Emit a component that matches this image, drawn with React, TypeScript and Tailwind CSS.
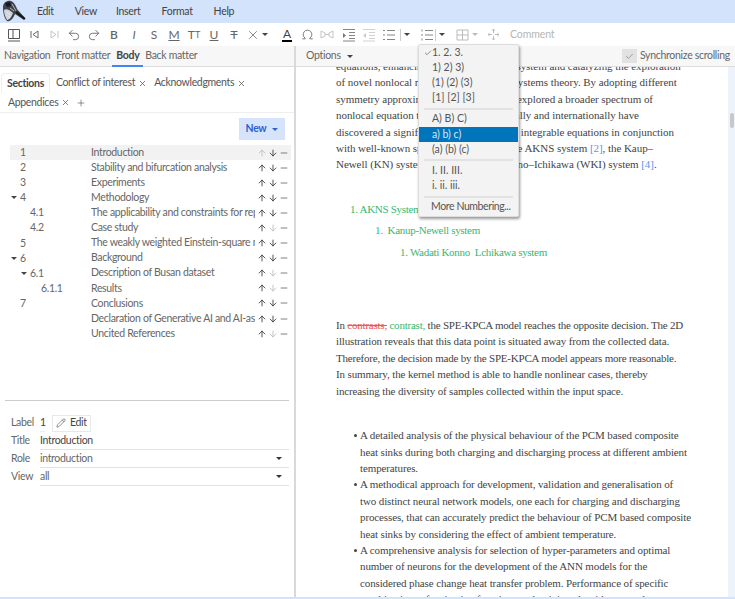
import { ArrowDown, ArrowUp, Check, Minus, Omega, Pencil, Plus, Redo2, Undo2, X } from 'lucide-react';

const ui = { fontFamily: 'Lato, sans-serif' };

const MENUS = [
  { label: 'Edit', className: 'ml-[37px]' },
  { label: 'View', className: 'ml-[21px]' },
  { label: 'Insert', className: 'ml-[19px]' },
  { label: 'Format', className: 'ml-[21px]' },
  { label: 'Help', className: 'ml-[21px]' },
];

const SECTIONS = [
  { num: '1', title: 'Introduction', indent: 0, caret: false, up: false, down: true, active: true },
  { num: '2', title: 'Stability and bifurcation analysis', indent: 0, caret: false, up: true, down: true },
  { num: '3', title: 'Experiments', indent: 0, caret: false, up: true, down: true },
  { num: '4', title: 'Methodology', indent: 0, caret: true, up: true, down: true },
  { num: '4.1', title: 'The applicability and constraints for replacing', indent: 1, caret: false, up: true, down: true },
  { num: '4.2', title: 'Case study', indent: 1, caret: false, up: true, down: false },
  { num: '5', title: 'The weakly weighted Einstein-square model of', indent: 0, caret: false, up: true, down: true },
  { num: '6', title: 'Background', indent: 0, caret: true, up: true, down: true },
  { num: '6.1', title: 'Description of Busan dataset', indent: 1, caret: true, up: true, down: false },
  { num: '6.1.1', title: 'Results', indent: 2, caret: false, up: true, down: false },
  { num: '7', title: 'Conclusions', indent: 0, caret: false, up: true, down: true },
  { num: '', title: 'Declaration of Generative AI and AI-assisted', indent: 0, caret: false, up: true, down: true },
  { num: '', title: 'Uncited References', indent: 0, caret: false, up: true, down: false },
];

const NUMBERING = [
  ['1. 2. 3.', '1) 2) 3)', '(1) (2) (3)', '[1] [2] [3]'],
  ['A) B) C)', 'a) b) c)', '(a) (b) (c)'],
  ['I. II. III.', 'i. ii. iii.'],
];

const BULLETS = [
  [
    'A detailed analysis of the physical behaviour of the PCM based composite',
    'heat sinks during both charging and discharging process at different ambient',
    'temperatures.',
  ],
  [
    'A methodical approach for development, validation and generalisation of',
    'two distinct neural network models, one each for charging and discharging',
    'processes, that can accurately predict the behaviour of PCM based composite',
    'heat sinks by considering the effect of ambient temperature.',
  ],
  [
    'A comprehensive analysis for selection of hyper-parameters and optimal',
    'number of neurons for the development of the ANN models for the',
    'considered phase change heat transfer problem. Performance of specific',
    'combinations of activation functions and training algorithms are also',
  ],
];

function Caret({ className = 'border-t-[#444]' }: { className?: string }) {
  return <span className={`inline-block h-0 w-0 border-x-[3px] border-t-[3px] border-x-transparent ${className}`} />;
}

function Cell({ children, className = '' }: { children: React.ReactNode; className?: string }) {
  return <span className={`flex h-4 w-[20px] shrink-0 items-center justify-center text-[12px] leading-none text-[#666] ${className}`}>{children}</span>;
}

function Bird() {
  return (
    <svg width="25" height="23" viewBox="0 0 25 23">
      <path d="M2 7 C2 3 6 0 10 1 C13 2 15 6 16 9 L24 18 L23 20 L14 14 C12 19 9 22 6 21 C3 18 2 12 2 7Z" fill="#3f444a" />
      <path d="M3 10 C5 8 9 10 12 13 C10 18 8 20 6 20 C4 17 3 13 3 10Z" fill="#cfd4da" />
      <path d="M4 3 L9 2 L10 6 L6 7Z" fill="#15181d" />
      <path d="M5 12 L10 15 M5 15 L9 17 M11 4 L15 11 M9 8 L13 11" stroke="#e8ecf2" strokeWidth="0.7" fill="none" />
      <path d="M15 12 L24 19" stroke="#101216" strokeWidth="1.6" />
    </svg>
  );
}

function LinesIcon({ kind, faded }: { kind: 'in' | 'out' | 'ul' | 'ol'; faded?: boolean }) {
  const c = faded ? '#ccc' : '#777';
  return (
    <svg width="14" height="14" viewBox="0 0 14 14" fill="none" stroke={c} strokeWidth="0.9">
      {kind === 'ul' || kind === 'ol' ? (
        <>
          <path d="M5 2.5H13M5 7H13M5 11.5H13" />
          <path d={kind === 'ul' ? 'M1 2.5H3M1 7H3M1 11.5H3' : 'M2 1.5V3.5M2 6V8M2 10.5V12.5'} />
        </>
      ) : (
        <>
          <path d="M1 1.5H13M7 4.5H13M7 7.5H13M7 10.5H13M1 13H13" />
          <path d={kind === 'in' ? 'M1 5L4 7.5L1 10Z' : 'M4 5L1 7.5L4 10Z'} fill={c} stroke="none" />
        </>
      )}
    </svg>
  );
}

function Toolbar() {
  return (
    <div className="flex h-[23px] shrink-0 items-center bg-white pl-[4px]">
      <Cell>
        <svg width="14" height="14" viewBox="0 0 14 14" fill="none" stroke="#555">
          <path d="M1.5 1.5H12.5V10.5H1.5ZM6 1.5V10.5M1 13H13" />
        </svg>
      </Cell>
      <Cell>
        <svg width="11" height="11" viewBox="0 0 11 11" fill="none" stroke="#666"><path d="M2 2V9M9 2L4 5.5L9 9Z" /></svg>
      </Cell>
      <Cell>
        <svg width="11" height="11" viewBox="0 0 11 11" fill="none" stroke="#c4c4c4"><path d="M9 2V9M2 2L7 5.5L2 9Z" /></svg>
      </Cell>
      <Cell><Undo2 size={14} strokeWidth={1.5} /></Cell>
      <Cell><Redo2 size={14} strokeWidth={1.5} /></Cell>
      <Cell className="font-semibold">B</Cell>
      <Cell className="italic">I</Cell>
      <Cell>S</Cell>
      <Cell className="underline">M</Cell>
      <Cell>T<span className="text-[9px]">T</span></Cell>
      <Cell className="underline">U</Cell>
      <Cell className="line-through">T</Cell>
      <Cell className="ml-[-1px]"><X size={14} strokeWidth={1.3} /></Cell>
      <span className="-ml-[1px] flex"><Caret /></span>
      <span className="ml-[12px] flex w-[14px] flex-col items-center text-[12px] leading-[12px] text-[#444]">
        A<span className="h-[2px] w-[10px] bg-black" />
      </span>
      <Cell className="ml-[3px]"><Omega size={13} strokeWidth={1.6} /></Cell>
      <Cell>
        <svg width="14" height="9" viewBox="0 0 14 9" fill="none" stroke="#c4c4c4"><path d="M1 1L5 3V6L1 8ZM13 1L9 3V6L13 8ZM5 4.5H9" /></svg>
      </Cell>
      <Cell className="ml-[2px]"><LinesIcon kind="in" /></Cell>
      <Cell><LinesIcon kind="out" faded /></Cell>
      <Cell><LinesIcon kind="ul" /></Cell>
      <span className="ml-[1px] h-3 border-l border-[#ccc]" />
      <span className="ml-[3px] flex"><Caret /></span>
      <Cell className="ml-[7px]"><LinesIcon kind="ol" /></Cell>
      <span className="-ml-[2px] h-3 border-l border-[#ccc]" />
      <span className="ml-[3px] flex"><Caret /></span>
      <Cell className="ml-[7px]">
        <svg width="13" height="12" viewBox="0 0 13 12" fill="none" stroke="#bbb"><path d="M1 1H12V11H1ZM1 6H12M6.5 1V11" /></svg>
      </Cell>
      <span className="flex"><Caret className="border-t-[#bbb]" /></span>
      <Cell className="ml-[5px]">
        <svg width="13" height="13" viewBox="0 0 13 13" fill="none" stroke="#bbb">
          <path d="M6.5 1V5M6.5 8V12M1 6.5H5M8 6.5H12M5.2 2.5L6.5 1L7.8 2.5M5.2 10.5L6.5 12L7.8 10.5M2.5 5.2L1 6.5L2.5 7.8M10.5 5.2L12 6.5L10.5 7.8" />
        </svg>
      </Cell>
      <span className="ml-[7px] text-[10.5px] tracking-[-0.1px] text-[#b5b5b5]">Comment</span>
    </div>
  );
}

function Row({ label, children }: { label: string; children: React.ReactNode }) {
  return (
    <div className="flex h-[18px] items-center">
      <span className="w-[29px] shrink-0">{label}</span>
      {children}
    </div>
  );
}

function LeftPanel() {
  return (
    <div className="flex w-[296px] shrink-0 flex-col border-r-2 border-[#d9d9d9] text-[10.5px] tracking-[-0.33px] text-[#666]">
      <div className="flex h-[21px] shrink-0 items-end border-b border-[#ddd] bg-[#f7f7f7] pl-[4px]">
        <span className="pb-[2px]">Navigation</span>
        <span className="ml-[6px] pb-[2px]">Front matter</span>
        <span className="-mb-px ml-[2px] border-b-2 border-[#4285f4] px-[4px] pb-[1px] font-bold text-[#444]">Body</span>
        <span className="ml-[2px] pb-[2px]">Back matter</span>
      </div>
      <div className="flex flex-wrap items-center border-b border-[#eee] pl-[1px]">
        <span className="mt-[6px] flex h-[20px] items-center rounded-t border border-b-0 border-[#eee] px-[5px] font-bold text-[#444]">Sections</span>
        <span className="ml-[6px] mt-[6px] flex items-center gap-[3px] text-[#555]">Conflict of interest <X size={9} strokeWidth={2} /></span>
        <span className="ml-[7px] mt-[6px] flex items-center gap-[3px] text-[#555]">Acknowledgments <X size={9} strokeWidth={2} /></span>
        <span className="flex h-[19px] w-full items-center gap-[3px] pl-[7px] text-[#555]">
          Appendices <X size={9} strokeWidth={2} /> <Plus size={10} strokeWidth={1.5} className="ml-[3px]" />
        </span>
      </div>
      <div className="flex h-[32px] shrink-0 items-start justify-end pr-[9px] pt-[5px]">
        <span className="flex h-[22px] w-[46px] items-center justify-center gap-[6px] bg-[#d6e4fb] font-bold text-[#2f5fd0]">
          New <Caret className="border-t-[#2f5fd0]" />
        </span>
      </div>
      <div className="ml-[10px] mr-[3px] flex flex-col">
        {SECTIONS.map((s) => (
          <div key={s.title} className={`flex h-[15.1px] items-center ${s.active ? 'bg-[#f2f2f2]' : ''}`}>
            <span className="relative h-full w-[81px] shrink-0 leading-[15px]">
              {s.caret && (
                <span className={`absolute top-[6px] flex ${s.indent ? 'left-[11px]' : 'left-[1px]'}`}><Caret /></span>
              )}
              <span className={s.indent === 2 ? 'ml-[31px]' : s.indent === 1 ? 'ml-[20px]' : 'ml-[10px]'}>{s.num}</span>
            </span>
            <span className="w-[164px] shrink-0 overflow-hidden whitespace-nowrap">{s.title}</span>
            <span className="flex flex-1 items-center pl-[2px] text-[#333]">
              <ArrowUp size={10} strokeWidth={2} className={`mr-[1px] ${s.up ? '' : 'text-[#bbb]'}`} />
              <ArrowDown size={10} strokeWidth={2} className={`mr-[1px] ${s.down ? '' : 'text-[#bbb]'}`} />
              <Minus size={10} strokeWidth={1.5} />
            </span>
          </div>
        ))}
      </div>
      <div className="mx-[5px] mt-[59px] border-t border-[#ccc]" />
      <div className="mt-[13px] flex flex-col pl-[11px] pr-[5px]">
        <Row label="Label">
          <span className="w-[5px] border-b border-[#eee] text-[#444]">1</span>
          <span className="ml-[7px] flex h-[17px] items-center gap-[4px] border border-[#e8e8e8] px-[3px] text-[#444]">
            <Pencil size={10} strokeWidth={1.4} /> Edit
          </span>
        </Row>
        <Row label="Title">
          <span className="flex h-full flex-1 items-center border-b border-[#e2e2e2] text-[#444]">Introduction</span>
        </Row>
        <Row label="Role">
          <span className="flex h-full flex-1 items-center justify-between border-b border-[#e2e2e2] pr-[7px]">introduction <Caret className="border-t-[#333]" /></span>
        </Row>
        <Row label="View">
          <span className="flex h-full flex-1 items-center justify-between border-b border-[#e2e2e2] pr-[7px]">all <Caret className="border-t-[#333]" /></span>
        </Row>
      </div>
    </div>
  );
}

function Cite({ children }: { children: React.ReactNode }) {
  return <span className="text-[#5b93ee]">{children}</span>;
}

function Document() {
  const serif = { fontFamily: '"Liberation Serif", serif' };
  return (
    <div className="relative flex min-w-0 flex-1 flex-col">
      <div className="flex h-[21px] shrink-0 items-center justify-between border-b border-[#ddd] bg-[#f7f7f7] pl-[10px] pr-[5px] text-[10.5px] tracking-[-0.3px] text-[#666]">
        <span className="flex items-center gap-[6px]">Options <Caret /></span>
        <span className="flex items-center gap-[3px]">
          <span className="flex h-[14px] w-[15px] items-center justify-center bg-[#e2e2e2]"><Check size={9} strokeWidth={1.5} /></span>
          Synchronize scrolling
        </span>
      </div>
      <div className="flex min-h-0 flex-1">
        <div style={serif} className="min-w-0 flex-1 overflow-hidden whitespace-nowrap pl-[40px] text-[11px] leading-[16.4px] text-[#444]">
          <div className="-mt-[9px] tracking-[-0.05px]">
            <p>equations, enhancing study of the AKNS system and catalyzing the exploration</p>
            <p>of novel nonlocal models and integrable systems theory. By adopting different</p>
            <p>symmetry approximations, scholars have explored a broader spectrum of</p>
            <p>nonlocal equation types. Teams domestically and internationally have</p>
            <p>discovered a significant range of nonlocal integrable equations in conjunction</p>
            <p>with well-known specific ones, such as the AKNS system <Cite>[2]</Cite>, the Kaup–</p>
            <p>Newell (KN) system <Cite>[3]</Cite>, the Wadati–Konno–Ichikawa (WKI) system <Cite>[4]</Cite>.</p>
          </div>
          <div className="mt-[28px] tracking-[-0.3px] text-[#35b871]">
            <p className="pl-[14px]">1. AKNS System</p>
            <p className="mt-[5px] pl-[39px]">1.&nbsp; Kanup-Newell system</p>
            <p className="mt-[5px] pl-[64px]">1. Wadati Konno&nbsp; Lchikawa system</p>
          </div>
          <div className="mt-[57px] tracking-[-0.15px]">
            <p className="tracking-[-0.22px]">In <span className="text-[#ee5555] line-through">contrasts,</span> <span className="text-[#35b871]">contrast,</span> the SPE-KPCA model reaches the opposite decision. The 2D</p>
            <p>illustration reveals that this data point is situated away from the collected data.</p>
            <p className="tracking-[-0.22px]">Therefore, the decision made by the SPE-KPCA model appears more reasonable.</p>
            <p className="tracking-[-0.12px]">In summary, the kernel method is able to handle nonlinear cases, thereby</p>
            <p>increasing the diversity of samples collected within the input space.</p>
          </div>
          <ul className="mt-[28px] tracking-[-0.12px]">
            {BULLETS.map((lines) => (
              <li key={lines[0]} className="relative pl-[24px]">
                <span className="absolute left-[18px] top-[7px] h-[3px] w-[3px] rounded-full bg-[#444]" />
                {lines.map((line) => (
                  <p key={line}>{line}</p>
                ))}
              </li>
            ))}
          </ul>
        </div>
        <div className="flex w-[7px] shrink-0 justify-center bg-[#eef3fb] pt-[46px]">
          <span className="h-[15px] w-[4px] rounded bg-[#c8c8c8]" />
        </div>
      </div>
      <NumberingMenu />
    </div>
  );
}

function NumberingMenu() {
  return (
    <div className="absolute left-[122px] top-[-2px] z-10 w-[101px] whitespace-nowrap rounded-[2px] border border-[#ddd] bg-[#f3f3f3] pb-[1px] text-[10.5px] text-[#555] shadow-[1px_2px_3px_rgba(0,0,0,0.4)]">
      {NUMBERING.map((group, i) => (
        <div key={group[0]}>
          {i > 0 && <div className="mx-[5px] my-[2px] border-t-2 border-[#e2e2e2]" />}
          {group.map((item) => (
            <div key={item} className={`relative flex h-[15.2px] items-center pl-[13px] ${item === 'a) b) c)' ? 'bg-[#0075bb] text-[#d8e8f4]' : ''}`}>
              {item === '1. 2. 3.' && <Check size={8} strokeWidth={2} className="absolute left-[5px] top-[4px]" />}
              {item}
            </div>
          ))}
        </div>
      ))}
      <div className="mx-[5px] my-[2px] border-t-2 border-[#e2e2e2]" />
      <div className="flex h-[15.2px] items-center pl-[12px] tracking-[-0.4px]">More Numbering...</div>
    </div>
  );
}

export default function App() {
  return (
    <div style={ui} className="relative flex h-[599px] w-[735px] flex-col overflow-hidden bg-white">
      <div className="flex h-[23px] shrink-0 items-center bg-[#d3e3fb] text-[10.5px] tracking-[-0.3px] text-[#444]">
        <span className="absolute left-0 top-0 pl-[1px]"><Bird /></span>
        {MENUS.map((m) => (
          <span key={m.label} className={m.className}>{m.label}</span>
        ))}
      </div>
      <Toolbar />
      <div className="flex min-h-0 flex-1">
        <LeftPanel />
        <Document />
      </div>
      <div className="h-[2px] shrink-0 bg-[#d3e3fb]" />
    </div>
  );
}
